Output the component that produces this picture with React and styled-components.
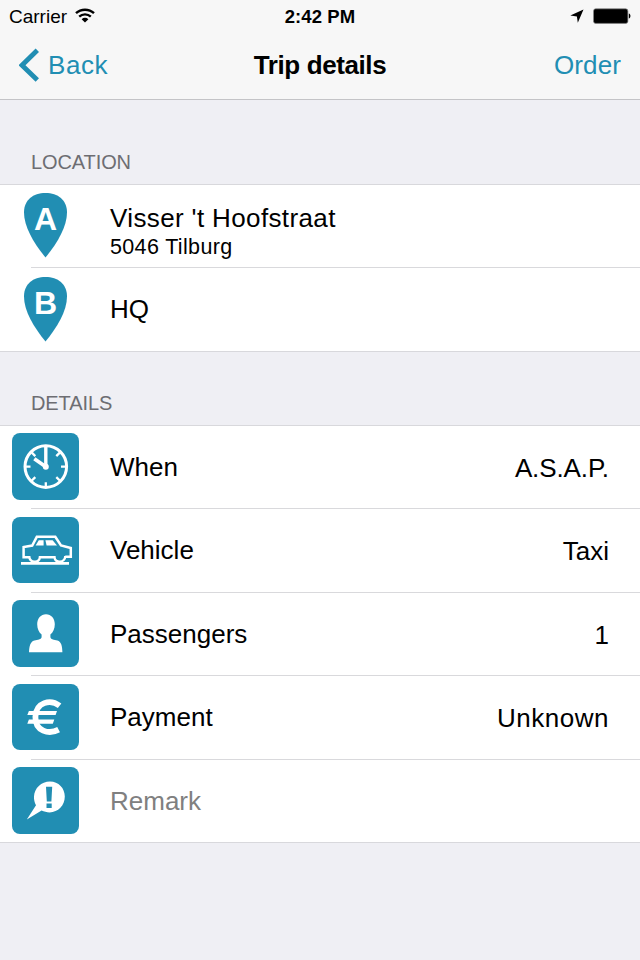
import React from 'react'
import styled, { createGlobalStyle } from "styled-components";

const blue = "#218eb3"

const GlobalStyle = createGlobalStyle`
* {
box-sizing:border-box;
}
body {
margin:0;
background-color:#efeff4;
font-family:"Liberation Sans", Arial, sans-serif;
color:#000;
}
`

const Page = styled.div`
width:640px;
height:960px;
overflow:hidden;
background-color:#efeff4;
`

const Header = styled.header`
height:100px;
background-color:#f7f7f7;
border-bottom:1px solid #c4c4c7;
`

const StatusBar = styled.div`
display:grid;
grid-template-columns:1fr auto 1fr;
align-items:center;
height:32px;
padding:0 9px;
font-size:19px;
line-height:22px;
`

const Carrier = styled.div`
display:flex;
align-items:center;
gap:8px;
padding-top:1px;
svg {
margin-top:-3px;
}
`

const Time = styled.div`
padding-top:1px;
font-weight:bold;
font-size:18.5px;
letter-spacing:0.1px;
`

const StatusIcons = styled.div`
display:flex;
align-items:center;
justify-content:flex-end;
gap:9px;
margin-top:-1px;
`

const NavBar = styled.nav`
display:grid;
grid-template-columns:1fr auto 1fr;
align-items:center;
height:66px;
padding:0 19px;
`

const NavButton = styled.button`
display:flex;
align-items:center;
justify-self:${({ $side }) => $side};
gap:9px;
padding:0;
border:none;
background:none;
color:${blue};
font-family:inherit;
font-size:26px;
line-height:30px;
letter-spacing:${({ $spacing }) => $spacing || "0"};
`

const Title = styled.h1`
margin:0;
font-size:26px;
line-height:30px;
letter-spacing:-0.4px;
`

const SectionTitle = styled.h2`
display:flex;
align-items:flex-end;
margin:0;
height:${({ $height }) => $height}px;
padding:0 31px 10px;
color:#6d6d72;
font-size:20px;
font-weight:normal;
line-height:23px;
letter-spacing:-0.1px;
`

const List = styled.ul`
margin:0;
padding:0;
list-style:none;
background-color:#fff;
border-top:1px solid #d8d8dc;
border-bottom:1px solid #d8d8dc;
`

const Row = styled.li`
display:flex;
height:${({ $height }) => $height}px;
`

const IconCell = styled.div`
width:110px;
padding:${({ $padding }) => $padding};
`

const Tile = styled.div`
width:67px;
height:${({ $height }) => $height}px;
border-radius:8px;
background-color:${blue};
svg {
display:block;
}
`

const Label = styled.div`
display:flex;
flex:1;
flex-direction:column;
justify-content:center;
padding-top:${({ $drop }) => $drop || 0}px;
padding-bottom:1px;
color:${({ $muted }) => $muted ? "#808080" : "#000"};
font-size:26px;
line-height:30px;
letter-spacing:${({ $spacing }) => $spacing || "0"};
`

const SubLabel = styled.span`
font-size:21.5px;
line-height:28px;
letter-spacing:0.35px;
`

const Value = styled.div`
align-self:center;
padding-right:31px;
padding-top:1px;
font-size:26px;
line-height:30px;
letter-spacing:${({ $spacing }) => $spacing || "0"};
`

const Separator = styled.li`
height:1px;
margin-left:31px;
background-color:#d9d9dc;
`

const PinText = styled.text`
fill:#fff;
font-family:"Liberation Sans", Arial, sans-serif;
font-weight:bold;
font-size:32px;
text-anchor:middle;
`

const Pin = ({ letter }) => (
    <svg width="43" height="65" viewBox="0 0 43 65" display="block">
        <path d="M21.5 0C34 0 43 7 43 19.5C43 34 33 50.5 21.5 64.5C10 50.5 0 34 0 19.5C0 7 9 0 21.5 0Z" fill={blue} />
        <PinText x="21.5" y="37">{letter}</PinText>
    </svg>
)

const WifiIcon = () => (
    <svg width="20" height="15" viewBox="0 0 20 15" fill="none" stroke="#000">
        <path d="M1 5.2C6 0.5 14 0.5 19 5.2" strokeWidth="2.4" />
        <path d="M4.2 8.6C7.4 5.5 12.6 5.5 15.8 8.6" strokeWidth="2.3" />
        <path d="M6.6 11.2C8.6 9.4 11.4 9.4 13.4 11.2L10 14.4Z" fill="#000" stroke="none" />
    </svg>
)

const LocationIcon = () => (
    <svg width="14" height="14" viewBox="0 0 14 14">
        <path d="M13.5 0.5L7.8 13.8L6.9 7.4L0.3 6.4Z" fill="#000" />
    </svg>
)

const BatteryIcon = () => (
    <svg width="38" height="16" viewBox="0 0 38 16">
        <rect x="0.5" y="0.8" width="34.4" height="14.6" rx="2.2" fill="#000" stroke="#888" strokeWidth="0.7" />
        <path d="M35.8 5.5C38 6 38 10 35.8 10.5Z" fill="#000" />
    </svg>
)

const BackIcon = () => (
    <svg width="20" height="34" viewBox="0 0 20 34" fill="none" stroke={blue}>
        <path d="M18.3 2.2L3 17.2L18.3 32" strokeWidth="4.8" />
    </svg>
)

const ClockIcon = () => (
    <svg width="67" height="67" viewBox="0 0 67 67" fill="none" stroke="#fff">
        <circle cx="33.8" cy="33.6" r="20.8" strokeWidth="3" />
        <path d="M33.8 49.2V54M14 33.6H18.5M49 33.6H54M19.6 19.4L23.3 23.1M48 19.4L44.3 23.1M19.6 47.8L23.3 44.1M48 47.8L44.3 44.1" strokeWidth="2.3" />
        <path d="M33.8 34V14" strokeWidth="3.4" />
        <path d="M33.8 33.8L22.3 25.7" strokeWidth="3.6" />
        <circle cx="33.8" cy="33.8" r="3" fill="#fff" stroke="none" />
    </svg>
)

const CarIcon = () => (
    <svg width="67" height="66" viewBox="0 0 67 66" fill="none" stroke="#fff">
        <path d="M9 46.4H57" strokeWidth="2.8" />
        <path d="M17.5 40.2H11.6V30L20.2 28.5L24.8 19.8H43.3L49 28.5L58.8 31V39.8H53.2" strokeWidth="2.5" />
        <path d="M17.2 39C17.5 46.5 27.5 46.5 27.9 40.2H42.5C42.8 46.5 53 46.5 53.3 39" strokeWidth="2.4" />
        <path d="M26.8 23.2H31.6V28.6H23.6ZM33.4 23.2H40.6L45 28.6H34.6Z" fill="#fff" stroke="none" />
    </svg>
)

const PersonIcon = () => (
    <svg width="67" height="67" viewBox="0 0 67 67" fill="#fff">
        <path d="M34 14.2C39.2 14.2 42.8 18.4 42.8 24.2C42.8 28.8 41 32.4 38.4 34.6V37.2C39 39.6 42 39.6 45.4 40.5C49.4 41.6 50.3 46.5 50.4 52.2H17C17.3 46.5 18.2 41.6 22.4 40.5C25.8 39.6 29 39.6 29.6 37.2V34.6C27 32.4 25.2 28.8 25.2 24.2C25.2 18.4 28.8 14.2 34 14.2Z" />
    </svg>
)

const EuroIcon = () => (
    <svg width="67" height="66" viewBox="0 0 67 66" fill="none" stroke="#fff">
        <path d="M47.6 21.8C38.5 14.8 24 18 23.4 32.8C23 47.2 37 50.8 46.6 45.6" strokeWidth="5.8" />
        <path d="M16.9 26.9H45L43.6 31.1H15.3ZM16.9 35.6H42.3L40.8 39.8H15.3Z" fill="#fff" stroke="none" />
    </svg>
)

const RemarkIcon = () => (
    <svg width="67" height="67" viewBox="0 0 67 67">
        <path d="M38 14.4C46.6 14.4 52.8 21 52.8 29.6C52.8 38.6 46.2 45.4 37.6 45.4C34.8 45.4 32 44.8 29.6 43.6L14.8 52.4L24 38.3C22.6 35.7 21.8 32.8 22 29.6C22.4 21 29.2 14.4 38 14.4Z" fill="#fff" />
        <path d="M34 19.8H40.2L39.4 34.4H34.8ZM34.5 36.5H39.7V41.1H34.5Z" fill={blue} />
    </svg>
)

const places = [
    { letter: "A", name: "Visser 't Hoofstraat", city: "5046 Tilburg", height: 82, drop: 13, padding: "8px 0 0 24px", spacing: "0.37px" },
    { letter: "B", name: "HQ", height: 83, padding: "9px 0 0 24px" },
]

const details = [
    { label: "When", value: "A.S.A.P.", icon: <ClockIcon />, height: 82, tile: 67, valueSpacing: "-0.1px" },
    { label: "Vehicle", value: "Taxi", icon: <CarIcon />, height: 83, tile: 66 },
    { label: "Passengers", value: "1", icon: <PersonIcon />, height: 82, tile: 67 },
    { label: "Payment", value: "Unknown", icon: <EuroIcon />, height: 83, tile: 66, valueSpacing: "0.5px" },
    { label: "Remark", muted: true, icon: <RemarkIcon />, height: 82, tile: 67 },
]

const App = () => {
    return (
        <Page>
            <GlobalStyle />
            <Header>
                <StatusBar>
                    <Carrier>Carrier <WifiIcon /></Carrier>
                    <Time>2:42 PM</Time>
                    <StatusIcons>
                        <LocationIcon />
                        <BatteryIcon />
                    </StatusIcons>
                </StatusBar>
                <NavBar>
                    <NavButton $side="start" $spacing="0.6px"><BackIcon />Back</NavButton>
                    <Title>Trip details</Title>
                    <NavButton $side="end" $spacing="0.1px">Order</NavButton>
                </NavBar>
            </Header>
            <SectionTitle $height={84}>LOCATION</SectionTitle>
            <List>
                {places.map((place, i) => (
                    <React.Fragment key={place.letter}>
                        {i > 0 && <Separator />}
                        <Row $height={place.height}>
                            <IconCell $padding={place.padding}><Pin letter={place.letter} /></IconCell>
                            <Label $spacing={place.spacing} $drop={place.drop}>
                                {place.name}
                                {place.city && <SubLabel>{place.city}</SubLabel>}
                            </Label>
                        </Row>
                    </React.Fragment>
                ))}
            </List>
            <SectionTitle $height={73}>DETAILS</SectionTitle>
            <List>
                {details.map((item, i) => (
                    <React.Fragment key={item.label}>
                        {i > 0 && <Separator />}
                        <Row $height={item.height}>
                            <IconCell $padding={item.height === 82 ? "7px 0 0 12px" : "8px 0 0 12px"}>
                                <Tile $height={item.tile}>{item.icon}</Tile>
                            </IconCell>
                            <Label $muted={item.muted}>{item.label}</Label>
                            {item.value && <Value $spacing={item.valueSpacing}>{item.value}</Value>}
                        </Row>
                    </React.Fragment>
                ))}
            </List>
        </Page>
    );
}

export default App;
